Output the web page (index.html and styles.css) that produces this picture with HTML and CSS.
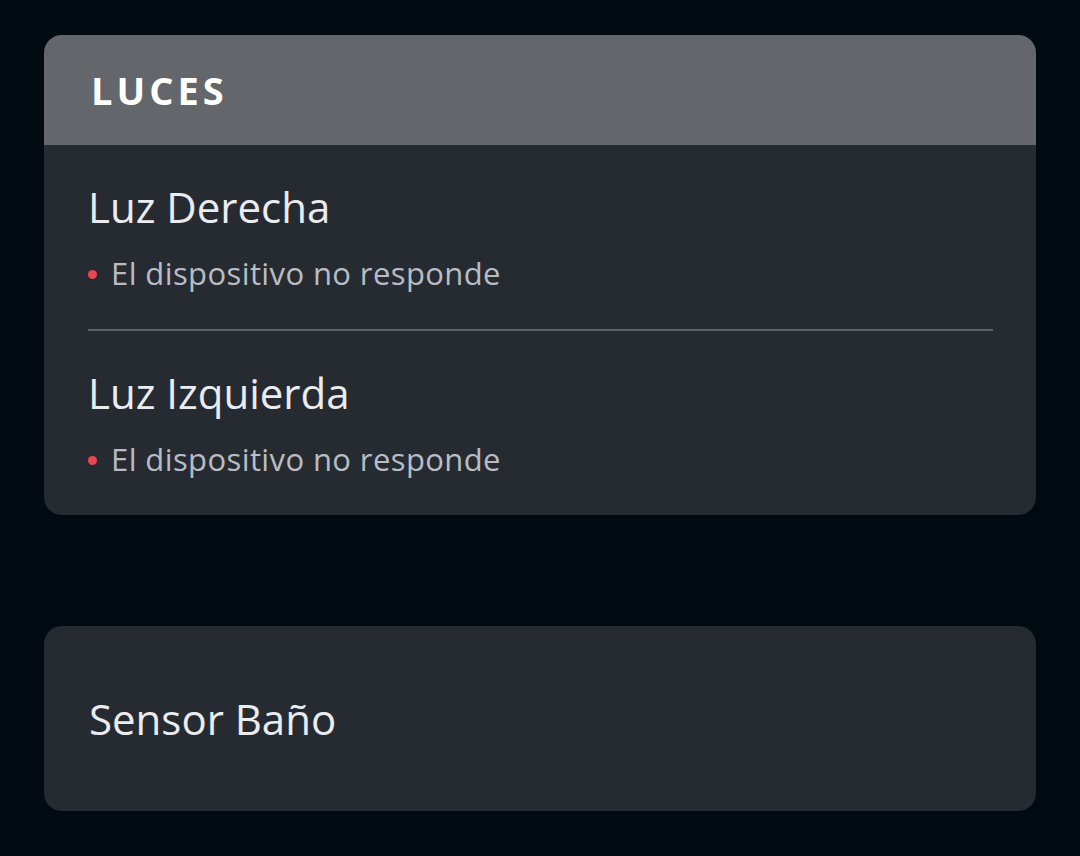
FILE: index.html
```html
<!DOCTYPE html>
<html lang="es">
<head>
<meta charset="utf-8">
<link rel="stylesheet" href="styles.css">
</head>
<body>
<main class="page">
  <section class="card">
    <header class="card-header"><h2 class="group-title">LUCES</h2></header>
    <div class="item">
      <div class="item-name">Luz Derecha</div>
      <div class="item-status"><span class="dot"></span>El dispositivo no responde</div>
    </div>
    <div class="divider"></div>
    <div class="item">
      <div class="item-name">Luz Izquierda</div>
      <div class="item-status"><span class="dot"></span>El dispositivo no responde</div>
    </div>
  </section>
  <section class="card card-single">
    <div class="item-name">Sensor Baño</div>
  </section>
</main>
</body>
</html>
```
FILE: styles.css
```css
html, body {
  margin: 0;
  padding: 0;
  background: #020a12;
}
body {
  font-family: "Open Sans", Lato, sans-serif;
  width: 1080px;
  height: 856px;
  overflow: hidden;
}
.page {
  padding: 35px 44px 0 44px;
  display: flex;
  flex-direction: column;
  gap: 111px;
}
.card {
  background: #262b32;
  border-radius: 18px;
  overflow: hidden;
}
.card-header {
  background: #63666b;
  height: 110px;
  display: flex;
  align-items: center;
  padding-left: 47px;
}
.group-title {
  margin: 0;
  color: #ffffff;
  font-size: 38px;
  font-weight: 700;
  letter-spacing: 4px;
  line-height: 1;
}
.item {
  padding: 37px 44px 36px 44px;
  display: flex;
  flex-direction: column;
  gap: 21px;
}
.item-name {
  color: #eaecef;
  font-size: 42px;
  line-height: 50px;
}
.item-status {
  color: #b9bdc3;
  font-size: 31px;
  letter-spacing: 0.4px;
  line-height: 40px;
  display: flex;
  align-items: center;
}
.dot {
  width: 9px;
  height: 9px;
  border-radius: 50%;
  background: #e6484f;
  margin-right: 14px;
  margin-top: 2px;
}
.divider {
  height: 2px;
  background: #5c6168;
  margin: 0 43px 0 44px;
}
.card-single {
  height: 185px;
  display: flex;
  align-items: center;
  padding-left: 45px;
}
```
